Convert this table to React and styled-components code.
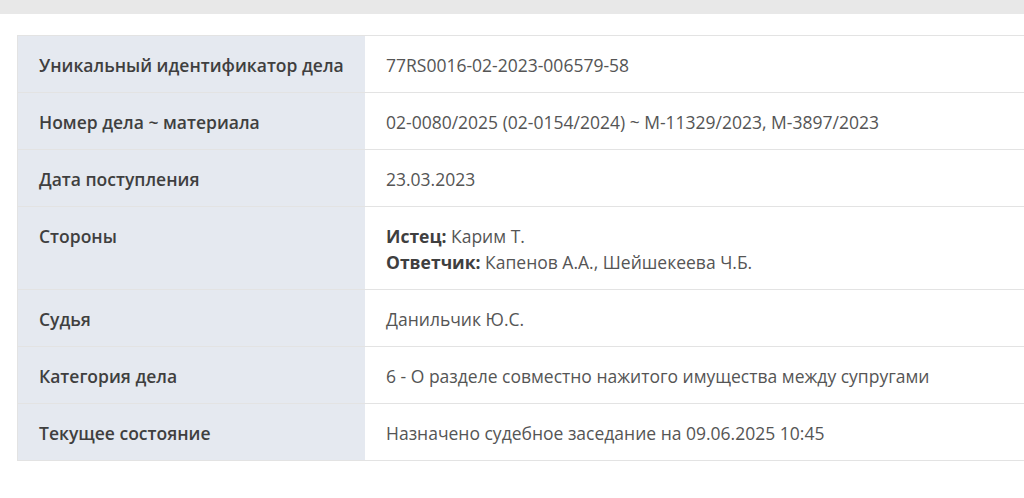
import styled, { createGlobalStyle } from "styled-components";

const GlobalStyle = createGlobalStyle`
  html, body {
    margin: 0;
    padding: 0;
    background: #fff;
    overflow: hidden;
  }
  body {
    font-family: "Open Sans", "Noto Sans", sans-serif;
  }
`;

const rows = [
  { label: "Уникальный идентификатор дела", value: "77RS0016-02-2023-006579-58" },
  { label: "Номер дела ~ материала", value: "02-0080/2025 (02-0154/2024) ~ М-11329/2023, М-3897/2023" },
  { label: "Дата поступления", value: "23.03.2023" },
  {
    label: "Стороны",
    parties: [
      { role: "Истец:", names: "Карим Т." },
      { role: "Ответчик:", names: "Капенов А.А., Шейшекеева Ч.Б." },
    ],
  },
  { label: "Судья", value: "Данильчик Ю.С." },
  { label: "Категория дела", value: "6 - О разделе совместно нажитого имущества между супругами" },
  { label: "Текущее состояние", value: "Назначено судебное заседание на 09.06.2025 10:45" },
];

export default function App() {
  return (
    <>
      <GlobalStyle />
      <Page>
        <TopBar />
        <Content>
          <InfoTable>
            <tbody>
              {rows.map((r) => (
                <Row key={r.label}>
                  <Label>{r.label}</Label>
                  <Value>
                    {r.parties
                      ? r.parties.map((p) => (
                          <div key={p.role}>
                            <b>{p.role}</b> {p.names}
                          </div>
                        ))
                      : r.value}
                  </Value>
                </Row>
              ))}
            </tbody>
          </InfoTable>
        </Content>
      </Page>
    </>
  );
}

const Page = styled.div`
  width: 1024px;
  height: 498px;
  background: #fff;
`;

const TopBar = styled.div`
  height: 14px;
  background: #e8e8e8;
`;

const Content = styled.div`
  padding: 21px 0 0 17px;
`;

const InfoTable = styled.table`
  width: 1040px;
  border-collapse: collapse;
  border-top: 1px solid #e3e3e3;
  font-size: 17.5px;
  line-height: 26px;
`;

const Row = styled.tr`
  border-bottom: 1px solid #e3e3e3;
`;

const Label = styled.td`
  width: 306px;
  background: #e5e9f0;
  color: #3f3f3f;
  font-weight: 600;
  padding: 16px 20px 14px 21px;
  vertical-align: top;
  border-left: 1px solid #e3e3e3;
  white-space: nowrap;
`;

const Value = styled.td`
  background: #fff;
  color: #555;
  padding: 16px 20px 14px 21px;
  vertical-align: top;
  white-space: nowrap;

  b {
    font-weight: 700;
    color: #3f3f3f;
  }
`;
